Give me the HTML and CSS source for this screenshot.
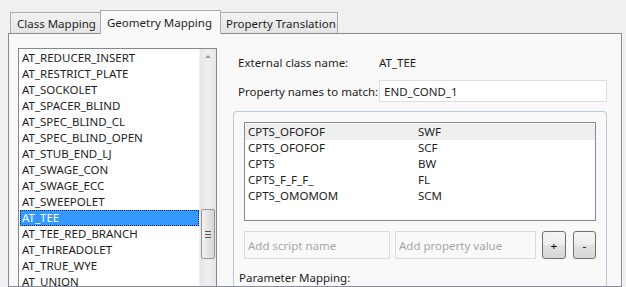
FILE: index.html
```html
<!DOCTYPE html>
<html lang="en">
<head>
    <meta charset="UTF-8">
    <title>Mapping Editor</title>
    <link rel="stylesheet" href="styles.css">
</head>
<body>
    <div class="window">
        <div class="tabs">
            <div class="tab">Class Mapping</div>
            <div class="tab active">Geometry Mapping</div>
            <div class="tab">Property Translation</div>
        </div>

        <div class="panel">
            <div class="listbox">
                <ul class="items">
                    <li>AT_REDUCER_INSERT</li>
                    <li>AT_RESTRICT_PLATE</li>
                    <li>AT_SOCKOLET</li>
                    <li>AT_SPACER_BLIND</li>
                    <li>AT_SPEC_BLIND_CL</li>
                    <li>AT_SPEC_BLIND_OPEN</li>
                    <li>AT_STUB_END_LJ</li>
                    <li>AT_SWAGE_CON</li>
                    <li>AT_SWAGE_ECC</li>
                    <li>AT_SWEEPOLET</li>
                    <li class="selected">AT_TEE</li>
                    <li>AT_TEE_RED_BRANCH</li>
                    <li>AT_THREADOLET</li>
                    <li>AT_TRUE_WYE</li>
                    <li>AT_UNION</li>
                </ul>
                <div class="scrollbar">
                    <div class="arrow-up"></div>
                    <div class="thumb"><span class="grip"></span></div>
                </div>
            </div>

            <div class="details">
                <div class="row">
                    <span class="label">External class name:</span>
                    <span class="value">AT_TEE</span>
                </div>
                <div class="row">
                    <span class="label">Property names to match:</span>
                    <input class="field" type="text" value="END_COND_1">
                </div>

                <div class="group">
                    <div class="listview">
                        <div class="lv-row hover"><span>CPTS_OFOFOF</span><span>SWF</span></div>
                        <div class="lv-row"><span>CPTS_OFOFOF</span><span>SCF</span></div>
                        <div class="lv-row"><span>CPTS</span><span>BW</span></div>
                        <div class="lv-row"><span>CPTS_F_F_F_</span><span>FL</span></div>
                        <div class="lv-row"><span>CPTS_OMOMOM</span><span>SCM</span></div>
                    </div>
                    <div class="add-row">
                        <input class="add script" type="text" placeholder="Add script name">
                        <input class="add prop" type="text" placeholder="Add property value">
                        <button class="btn">+</button>
                        <button class="btn">-</button>
                    </div>
                    <div class="caption">Parameter Mapping:</div>
                </div>
            </div>
        </div>
    </div>
</body>
</html>
```

FILE: styles.css
```css
* { box-sizing: border-box; }
html, body { height: 100%; }
body { margin: 0; background: #f0f0f0; font-family: "Noto Sans", sans-serif; font-size: 11.5px; color: #1e1e1e; overflow: hidden; }

.window { padding: 10px 4px 0 8px; height: 100%; display: flex; flex-direction: column; }

.tabs { display: flex; align-items: flex-end; padding-left: 2px; height: 23px; position: relative; z-index: 1; }
.tab { height: 21px; line-height: 21px; padding: 0 6px; border: 1px solid #acacac; border-bottom: none; background: linear-gradient(#f2f2f2, #e5e5e5); margin-left: -1px; white-space: nowrap; }
.tab:first-child { margin-left: 0; width: 91px; }
.tab.active { height: 24px; line-height: 23px; margin-bottom: -1px; background: #f9f9f9; border-color: #acacac; width: 121px; }
.tab:last-child { width: 118px; padding: 0 5px; }

.panel { flex: 1; border: 1px solid #898c95; background: #f9f9f9; display: flex; padding: 14px 0 0 9px; min-height: 0; }

.listbox { width: 199px; border: 1px solid #828790; border-bottom: none; background: #fff; display: flex; }
.items { list-style: none; margin: 0; padding: 1px 0 0 1px; flex: 1; }
.items li { height: 16px; line-height: 16px; padding-left: 2px; white-space: nowrap; }
.items li.selected { background: #3399ff; color: #fff; outline: 1px dotted #0a246a; outline-offset: -1px; }

.scrollbar { width: 17px; background: linear-gradient(90deg, #e6e6e6, #efefef 50%, #e6e6e6); border-left: 1px solid #f0f0f0; position: relative; }
.arrow-up { margin: 6px auto 0; width: 0; height: 0; border-left: 3px solid transparent; border-right: 3px solid transparent; border-bottom: 3px solid #9a9a9a; }
.thumb { position: absolute; left: 1px; top: 160px; width: 14px; height: 50px; border: 1px solid #959595; border-radius: 2px; background: linear-gradient(90deg, #f3f3f3, #e4e4e4 50%, #d4d4d4); display: flex; align-items: center; justify-content: center; }
.grip { width: 6px; height: 7px; border-top: 1px solid #555; border-bottom: 1px solid #555; position: relative; }
.grip::after { content: ""; position: absolute; left: 0; right: 0; top: 2px; border-top: 1px solid #555; }

.details { margin-left: 16px; width: 374px; display: flex; flex-direction: column; }
.row { display: flex; align-items: center; height: 22px; }
.row:first-child { margin-top: 3px; }
.row + .row { margin-top: 7px; }
.label { width: 146px; padding-left: 5px; white-space: nowrap; }
.field { width: 228px; height: 22px; border: 1px solid #dedede; background: #fff; font: inherit; color: inherit; padding: 0 4px; outline: none; }

.group { margin-top: 9px; flex: 1; border: 1px solid #b9cbdf; border-bottom: none; border-radius: 4px 4px 0 0; padding: 10px 10px 0 10px; }
.listview { height: 99px; border: 1px solid #828790; background: #fff; padding-top: 1px; }
.lv-row { display: flex; height: 16px; line-height: 16px; padding-left: 3px; }
.lv-row span:first-child { width: 170px; }
.lv-row.hover { background: #efefef; }

.add-row { display: flex; margin-top: 10px; height: 28px; }
.add { height: 28px; border: 1px solid #dcdcdc; background: #f9f9f9; font: inherit; padding: 0 3px; outline: none; }
.add::placeholder { color: #a6a6a6; }
.script { width: 146px; }
.prop { width: 141px; margin-left: 5px; }
.btn { width: 24px; height: 28px; margin-left: 6px; border: 1px solid #707070; border-radius: 3px; background: linear-gradient(#f4f4f4, #ededed 50%, #e2e2e2 51%, #d6d6d6); font: inherit; padding: 0; color: #000; }
.btn + .btn { margin-left: 7px; }

.caption { margin-top: 11px; padding-left: 5px; margin-left: -10px; }
```
